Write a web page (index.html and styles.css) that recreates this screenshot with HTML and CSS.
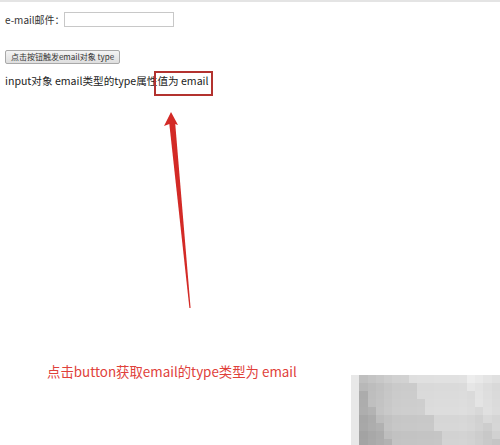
FILE: index.html
```html
<!DOCTYPE html>
<html>
<head>
<meta charset="utf-8">
<link rel="stylesheet" href="styles.css">
</head>
<body>
<div class="page">
  <div class="row">
    <span class="label">e-mail邮件：</span><input class="field" type="email">
  </div>
  <div class="btnrow"><button class="btn">点击按钮触发email对象 type</button></div>
  <div class="result">input对象 email类型的type属性值为 email</div>
  <div class="note">点击button获取email的type类型为 email</div>
  <div class="box"></div>
  <svg class="arrow" width="500" height="445" viewBox="0 0 500 445">
    <polygon points="169,121 175,121 190.6,308 189.4,308" fill="#d32a26"/>
    <polygon points="164,126 171,112 178,125 172,123" fill="#d32a26"/>
  </svg>
  <div class="mosaic" id="mosaic"></div>
</div>
<script src="script.js"></script>
</body>
</html>
```
FILE: styles.css
```css
html, body { margin: 0; padding: 0; background: #fff; }
body { width: 500px; height: 445px; overflow: hidden; font-family: "Noto Sans CJK SC", "Noto Sans", sans-serif; color: #222; }
.page { position: relative; width: 500px; height: 445px; border-top: 2px solid #e4e4e4; box-sizing: border-box; }
.row { display: flex; align-items: center; padding: 10px 0 0 5px; height: 15px; }
.label { font-size: 10px; line-height: 15px; color: #333; }
.field { width: 110px; height: 15px; box-sizing: border-box; border: 1px solid #c8c8c8; margin: 0 0 0 -1px; padding: 0; background: #fff; }
.btnrow { padding: 23px 0 0 5px; display: flex; }
.btn { width: 115px; height: 14px; padding: 0; margin: 0; font-family: inherit; font-size: 8px; line-height: 12px; color: #333; background: linear-gradient(#f4f4f4, #dedede); border: 1px solid #a9a9a9; border-radius: 2px; }
.result { padding: 9px 0 0 5px; font-size: 10.6px; line-height: 15px; color: #222; }
.note { padding: 275px 0 0 47px; font-size: 13.4px; line-height: 16px; color: #e0413a; }
.box { position: absolute; left: 154px; top: 69px; width: 59px; height: 25px; box-sizing: border-box; border: 2px solid #b3322f; }
.arrow { position: absolute; left: 0; top: -2px; }
.mosaic { position: absolute; left: 351px; top: 373px; width: 149px; height: 72px; display: grid; grid-template-columns: repeat(18, 1fr); grid-auto-rows: 8px; }
```
FILE: script.js
```js
(function () {
  var m = document.getElementById('mosaic');
  var cols = 18, rows = 9;
  for (var r = 0; r < rows; r++) {
    for (var c = 0; c < cols; c++) {
      var x = c / (cols - 1);
      var g;
      if (x < 0.3) g = 172 + x * 110;
      else if (x < 0.8) g = 205 + (x - 0.3) * 40;
      else g = 225 - (x - 0.8) * 40;
      if (r === 0) g += 8;
      if (r >= 5) g -= 8;
      if (r >= 7) g -= 6;
      g += ((c * 37 + r * 53) % 13) - 6;
      if (c === 0) g = 232;
      g = Math.max(150, Math.min(245, Math.round(g)));
      var d = document.createElement('div');
      d.style.background = 'rgb(' + g + ',' + g + ',' + g + ')';
      m.appendChild(d);
    }
  }
})();
```
